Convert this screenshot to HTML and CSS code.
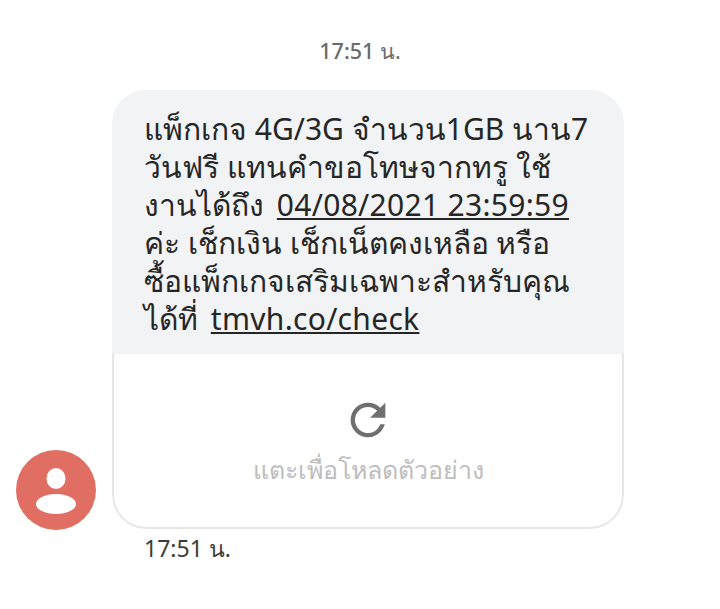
FILE: index.html
```html
<!DOCTYPE html>
<html lang="th">
<head>
<meta charset="utf-8">
<title>ข้อความ</title>
<link rel="stylesheet" href="styles.css">
</head>
<body>
<main class="thread">
  <p class="stamp">17:51 <span class="stamp-unit">น.</span></p>
  <div class="row">
    <div class="avatar">
      <svg class="avatar-icon" viewBox="0 0 80 80" width="80" height="80" aria-hidden="true">
        <ellipse cx="40" cy="28.5" rx="9.5" ry="10.5" fill="#fff"/>
        <ellipse cx="40" cy="54" rx="20" ry="10" fill="#fff"/>
      </svg>
    </div>
    <div class="column">
      <article class="bubble">
        <div class="body">แพ็กเกจ 4G/3G จำนวน1GB นาน7<br>วันฟรี แทนคำขอโทษจากทรู ใช้<br>งานได้ถึง <a class="link">04/08/2021 23:59:59</a><br>ค่ะ เช็กเงิน เช็กเน็ตคงเหลือ หรือ<br>ซื้อแพ็กเกจเสริมเฉพาะสำหรับคุณ<br>ได้ที่ <a class="link">tmvh.co/check</a></div>
        <div class="preview">
          <svg class="reload" viewBox="0 0 24 24" width="52" height="52" aria-hidden="true">
            <path fill="#6f6f6f" d="M17.65 6.35A7.95 7.95 0 0 0 12 4a8 8 0 1 0 7.73 10h-2.08A6 6 0 1 1 12 6c1.66 0 3.14.69 4.22 1.78L13 11h7V4l-2.35 2.35z"/>
          </svg>
          <span class="hint">แตะเพื่อโหลดตัวอย่าง</span>
        </div>
      </article>
      <p class="sent">17:51 น.</p>
    </div>
  </div>
</main>
</body>
</html>
```
FILE: styles.css
```css
html, body {
  margin: 0;
  background: #fff;
}

.thread {
  width: 720px;
  height: 609px;
  overflow: hidden;
  padding-top: 36px;
  box-sizing: border-box;
  font-family: "Noto Sans", "Liberation Sans", sans-serif;
}

.stamp {
  margin: 0 0 25px;
  height: 29px;
  line-height: 29px;
  text-align: center;
  font-size: 21.5px;
  font-weight: 500;
  color: #6b6b6b;
}

.stamp-unit {
  font-weight: 400;
}

.row {
  display: flex;
  align-items: flex-start;
  padding-left: 16px;
  gap: 16px;
}

.avatar {
  width: 80px;
  height: 80px;
  margin-top: 360px;
  border-radius: 50%;
  background: #e06e63;
  flex: none;
}

.avatar-icon {
  display: block;
}

.column {
  width: 512px;
}

.bubble {
  height: 439px;
  border-radius: 34px;
  box-sizing: border-box;
  overflow: hidden;
  display: flex;
  flex-direction: column;
}

.body {
  height: 264px;
  box-sizing: border-box;
  padding: 20px 0 0 32px;
  background: #f1f3f4;
  font-size: 30px;
  line-height: 38px;
  color: #262626;
  white-space: nowrap;
}

.link {
  margin-left: 5px;
  letter-spacing: 0.3px;
  text-decoration: underline;
  text-decoration-thickness: 2px;
  text-underline-offset: 2px;
}

.preview {
  flex: 1;
  display: flex;
  flex-direction: column;
  align-items: center;
  box-sizing: border-box;
  padding-top: 40px;
  border: 2px solid #e6e6e6;
  border-top: 0;
  border-radius: 0 0 34px 34px;
}

.reload {
  display: block;
}

.hint {
  margin-top: 7px;
  font-size: 25px;
  line-height: 32px;
  color: #bdbdbd;
}

.sent {
  margin: 3px 0 0 32px;
  font-size: 23px;
  line-height: 32px;
  color: #3c3c3c;
}
```
